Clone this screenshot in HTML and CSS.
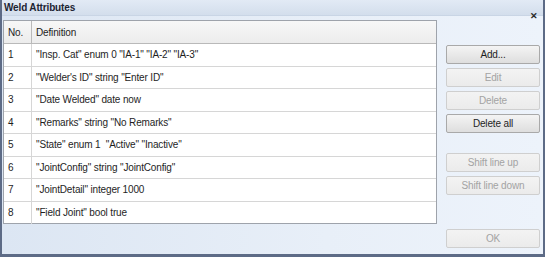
FILE: index.html
```html
<!DOCTYPE html>
<html lang="en">
<head>
    <meta charset="UTF-8">
    <link rel="stylesheet" href="styles.css">
</head>
<body>
    <div class="window">
        <div class="titlebar">
            <span class="title">Weld Attributes</span>
            <span class="close">&#x2715;</span>
        </div>
        <div class="content">
            <div class="grid">
                <div class="row head">
                    <div class="cell no">No.</div>
                    <div class="cell def">Definition</div>
                </div>
                <div class="row"><div class="cell no">1</div><div class="cell def">"Insp. Cat" enum 0 "IA-1" "IA-2" "IA-3"</div></div>
                <div class="row"><div class="cell no">2</div><div class="cell def">"Welder's ID" string "Enter ID"</div></div>
                <div class="row"><div class="cell no">3</div><div class="cell def">"Date Welded" date now</div></div>
                <div class="row"><div class="cell no">4</div><div class="cell def">"Remarks" string "No Remarks"</div></div>
                <div class="row"><div class="cell no">5</div><div class="cell def">"State" enum 1&nbsp; "Active" "Inactive"</div></div>
                <div class="row"><div class="cell no">6</div><div class="cell def">"JointConfig" string "JointConfig"</div></div>
                <div class="row"><div class="cell no">7</div><div class="cell def">"JointDetail" integer 1000</div></div>
                <div class="row"><div class="cell no">8</div><div class="cell def">"Field Joint" bool true</div></div>
            </div>
            <div class="buttons">
                <button class="btn">Add...</button>
                <button class="btn" disabled>Edit</button>
                <button class="btn" disabled>Delete</button>
                <button class="btn">Delete all</button>
                <button class="btn gap" disabled>Shift line up</button>
                <button class="btn" disabled>Shift line down</button>
                <button class="btn ok" disabled>OK</button>
            </div>
        </div>
    </div>
</body>
</html>
```

FILE: styles.css
```css
body {
    margin: 0;
    font-family: "Liberation Sans", Arial, sans-serif;
    font-size: 10px;
    letter-spacing: -0.15px;
    color: #1e1e1e;
}
.window {
    width: 545px;
    height: 257px;
    box-sizing: border-box;
    border-left: 2px solid #5d6b86;
    border-right: 2px solid #5d6b86;
    border-bottom: 3px solid #5d6b86;
    background: linear-gradient(to right, #dce6f3, #e8eff8 60%, #edf3fb);
    display: flex;
    flex-direction: column;
}
.titlebar {
    height: 15px;
    display: flex;
    justify-content: space-between;
    align-items: center;
    background: linear-gradient(#e2eaf5, #d3deec);
    border-bottom: 1px solid #c9d5e5;
    padding: 0 5px 0 2px;
}
.title {
    font-weight: bold;
    font-size: 10px;
    color: #1c2433;
}
.close {
    font-size: 9px;
    font-weight: bold;
    color: #2a2a2a;
    position: relative;
    top: 8px;
}
.content {
    display: flex;
    flex: 1;
}
.grid {
    width: 434px;
    height: 204px;
    box-sizing: border-box;
    margin: 4px 0 0 1px;
    border: 1px solid #9ea3ab;
    background: #fff;
}
.row {
    display: flex;
    height: 22.5px;
    box-sizing: border-box;
    border-bottom: 1px solid #d6d6d6;
}
.row:last-child {
    border-bottom: none;
}
.row.head {
    height: 23px;
    background: linear-gradient(#f7f7f7, #ececec);
    border-bottom: 1px solid #b9b9b9;
}
.cell {
    display: flex;
    align-items: center;
    padding-left: 4px;
}
.no {
    width: 23px;
    border-right: 1px solid #d6d6d6;
}
.head .no {
    border-right-color: #b9b9b9;
}
.buttons {
    display: flex;
    flex-direction: column;
    gap: 4px;
    margin: 29px 0 0 9px;
    width: 94px;
}
.btn {
    height: 19px;
    font-family: inherit;
    font-size: 10px;
    letter-spacing: -0.15px;
    color: #1e1e1e;
    border: 1px solid #a9a9a9;
    border-radius: 2px;
    background: linear-gradient(#f4f4f4, #dedede);
    padding: 0;
}
.btn:disabled {
    color: #a3a3a3;
    border-color: #cfcfcf;
    background: linear-gradient(#f3f3f3, #ebebeb);
}
.gap {
    margin-top: 16px;
}
.ok {
    margin-top: 30px;
}
```
